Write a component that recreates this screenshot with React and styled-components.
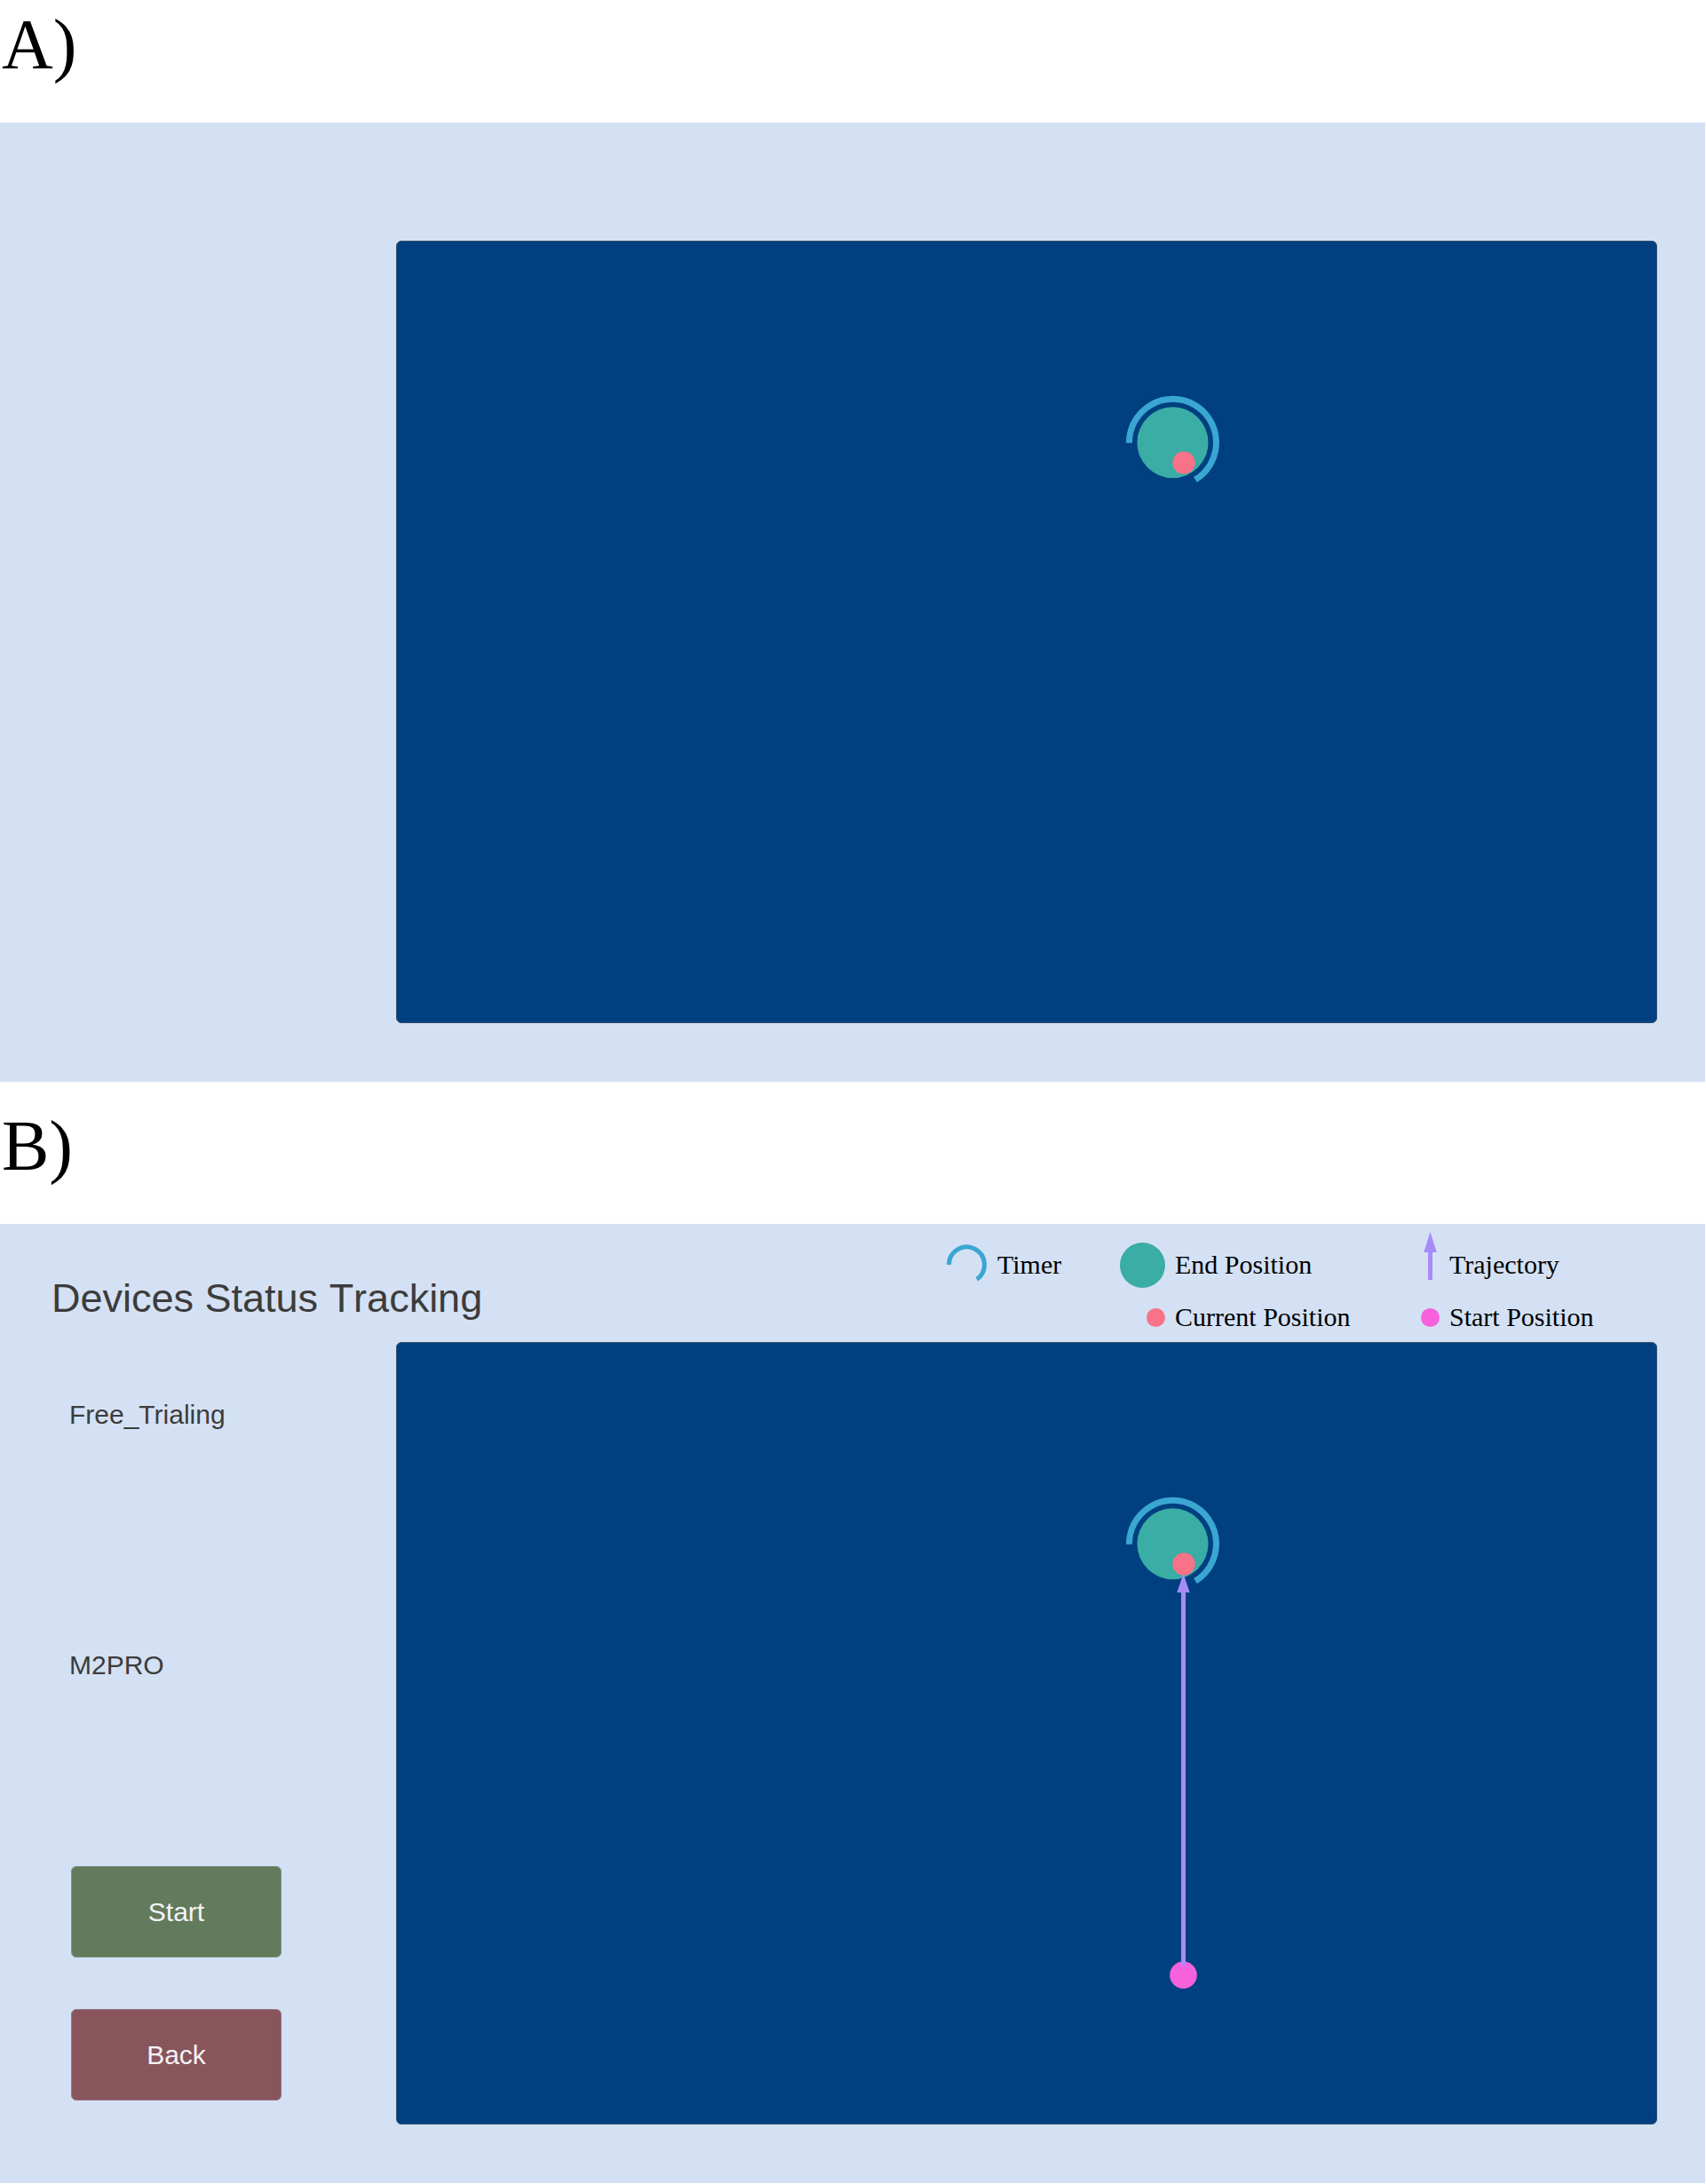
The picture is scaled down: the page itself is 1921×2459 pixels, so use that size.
import React from "react";
import styled, { createGlobalStyle } from "styled-components";

const color = {
  panel: "#d4e1f4",
  field: "#004080",
  fieldEdge: "#34506e",
  target: "#3aada5",
  timer: "#3aa6d2",
  current: "#f87288",
  path: "#a68cf6",
  origin: "#f761dc",
  ink: "#3c3c3c",
};

const GlobalStyle = createGlobalStyle`
  *, *::before, *::after { box-sizing: border-box; }
  body { margin: 0; background: #ffffff; }
`;

const Page = styled.main`
  display: flex;
  flex-direction: column;
  gap: 22px;
  padding: 0 1px 1px 0;
`;

const Section = styled.section`
  display: flex;
  flex-direction: column;
`;

const SectionLabel = styled.h2`
  margin: 0;
  padding: 4px 2px 42px;
  font: 400 80px/92px "Liberation Serif", serif;
  color: #000000;
`;

const Panel = styled.div`
  display: flex;
  flex-direction: column;
  padding-bottom: 66px;
  background: ${color.panel};
  font-family: "Liberation Sans", sans-serif;
  color: ${color.ink};
`;

const PanelHeader = styled.header`
  display: flex;
  justify-content: space-between;
  align-items: flex-start;
  min-height: 133px;
  padding: 9px 124px 0 58px;
`;

const Title = styled.h1`
  margin: 0;
  padding-top: 49px;
  font-size: 45px;
  line-height: 52px;
  font-weight: 400;
  font-kerning: none;
`;

const Legend = styled.ul`
  display: grid;
  grid-template-columns: 195px 339px 196px;
  grid-template-rows: 74px 44px;
  margin: 0;
  padding: 0;
  list-style: none;
  font: 400 30px/34px "Liberation Serif", serif;
  color: #000000;
`;

const LegendItem = styled.li`
  grid-column: ${(p) => p.$column};
  display: flex;
  align-items: center;
  gap: 11px;
  white-space: nowrap;
`;

const LegendMark = styled.span`
  display: flex;
  justify-content: flex-end;
  flex: none;
  width: ${(p) => p.$width}px;

  svg { display: block; }
`;

const PanelBody = styled.div`
  display: grid;
  grid-template-columns: 446px minmax(0, 1fr);
  padding-right: 54px;
`;

const Sidebar = styled.aside`
  display: flex;
  flex-direction: column;
  gap: 209px;
  padding-top: 65px;
`;

const Status = styled.div`
  display: flex;
  flex-direction: column;
  gap: 248px;
  padding-left: 78px;
`;

const StatusLine = styled.p`
  margin: 0;
  font-size: 30px;
  line-height: 34px;
`;

const Actions = styled.div`
  display: flex;
  flex-direction: column;
  align-items: flex-start;
  gap: 58px;
  padding-left: 80px;
`;

const ActionButton = styled.button`
  width: 237px;
  height: 103px;
  padding: 0;
  border: 1px solid ${(p) => p.$edge};
  border-radius: 6px;
  background: ${(p) => p.$fill};
  color: #f4f4f4;
  font: 400 30px/34px "Liberation Sans", sans-serif;
  cursor: pointer;
`;

const Field = styled.div`
  border: 1px solid ${color.fieldEdge};
  border-radius: 6px;
  background: ${color.field};
  overflow: hidden;

  svg { display: block; width: 100%; height: auto; }
`;

function Workspace({ showPath }) {
  return (
    <Field>
      <svg viewBox="1 1 1418 879" role="img" aria-label="Tracking field">
        <circle cx="874.5" cy="227.3" r="40" fill={color.target} />
        <path
          d="M825.5 227.8A49 49 0 1 1 900 269.1"
          fill="none"
          stroke={color.timer}
          strokeWidth="7"
        />
        <circle cx="887" cy="250" r="12.7" fill={color.current} />
        {showPath && (
          <>
            <circle cx="886.5" cy="712.7" r="15.3" fill={color.origin} />
            <path
              d="M886.5 261L893.7 282H889V702.5H884V282H879.3Z"
              fill={color.path}
            />
          </>
        )}
      </svg>
    </Field>
  );
}

function Dot({ size, fill }) {
  return (
    <svg width={size} height={size} viewBox="0 0 20 20" aria-hidden="true">
      <circle cx="10" cy="10" r="10" fill={fill} />
    </svg>
  );
}

function TimerMark() {
  return (
    <svg width="46" height="46" viewBox="0 0 46 46" aria-hidden="true">
      <path
        d="M2.5 23A20 20 0 1 1 33.9 39.4"
        fill="none"
        stroke={color.timer}
        strokeWidth="5"
      />
    </svg>
  );
}

function ArrowMark() {
  return (
    <svg width="21" height="74" viewBox="0 0 21 74" aria-hidden="true">
      <path d="M10.5 0L17.8 23H13V54H8V23H3.2Z" fill={color.path} />
    </svg>
  );
}

const legend = [
  { label: "Timer", column: 1, width: 46, mark: <TimerMark /> },
  { label: "End Position", column: 2, width: 51, mark: <Dot size={51} fill={color.target} /> },
  { label: "Trajectory", column: 3, width: 21, mark: <ArrowMark /> },
  { label: "Current Position", column: 2, width: 51, mark: <Dot size={21} fill={color.current} /> },
  { label: "Start Position", column: 3, width: 21, mark: <Dot size={21} fill={color.origin} /> },
];

export default function App() {
  return (
    <>
      <GlobalStyle />
      <Page>
        <Section>
          <SectionLabel>A)</SectionLabel>
          <Panel>
            <PanelHeader />
            <PanelBody>
              <Sidebar />
              <Workspace />
            </PanelBody>
          </Panel>
        </Section>

        <Section>
          <SectionLabel>B)</SectionLabel>
          <Panel>
            <PanelHeader>
              <Title>Devices Status Tracking</Title>
              <Legend>
                {legend.map((item) => (
                  <LegendItem key={item.label} $column={item.column}>
                    <LegendMark $width={item.width}>{item.mark}</LegendMark>
                    {item.label}
                  </LegendItem>
                ))}
              </Legend>
            </PanelHeader>
            <PanelBody>
              <Sidebar>
                <Status>
                  <StatusLine>Free_Trialing</StatusLine>
                  <StatusLine>M2PRO</StatusLine>
                </Status>
                <Actions>
                  <ActionButton type="button" $fill="#637b5d" $edge="#7f9385">
                    Start
                  </ActionButton>
                  <ActionButton type="button" $fill="#89555d" $edge="#957580">
                    Back
                  </ActionButton>
                </Actions>
              </Sidebar>
              <Workspace showPath />
            </PanelBody>
          </Panel>
        </Section>
      </Page>
    </>
  );
}
